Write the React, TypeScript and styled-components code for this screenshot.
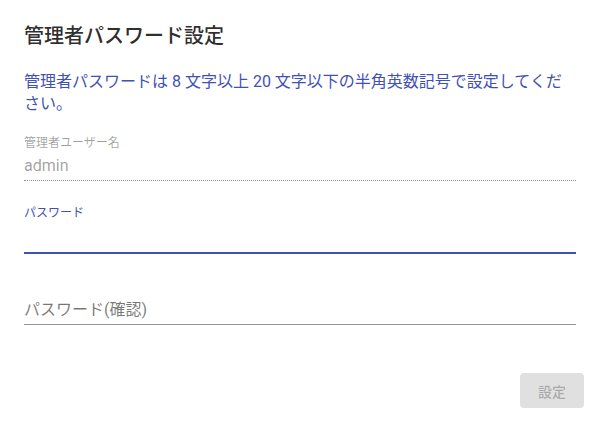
import styled, { createGlobalStyle } from "styled-components"

const GlobalStyle = createGlobalStyle`
  html, body {
    margin: 0;
    padding: 0;
    background: #ffffff;
  }
  body {
    font-family: Roboto, "Noto Sans CJK JP", "Noto Sans", sans-serif;
  }
`

const Dialog = styled.div`
  width: 600px;
  height: 425px;
  box-sizing: border-box;
  background: #ffffff;
  border-radius: 4px;
  display: flex;
  flex-direction: column;
`

const Title = styled.h2`
  margin: 0;
  padding: 20px 24px 0;
  font-size: 20px;
  line-height: 32px;
  font-weight: 500;
  color: rgba(0, 0, 0, 0.84);
`

const Content = styled.div`
  padding: 0 24px;
  display: flex;
  flex-direction: column;
`

const Description = styled.p`
  margin: 19px 0 0;
  font-size: 16px;
  line-height: 22px;
  color: #3f51b5;
`

const Field = styled.div<{ $gap: number }>`
  margin-top: ${(p) => p.$gap}px;
  display: flex;
  flex-direction: column;
`

const Label = styled.label<{ $focused?: boolean }>`
  font-size: 12px;
  line-height: 16px;
  color: ${(p) => (p.$focused ? "#3f51b5" : "rgba(0, 0, 0, 0.38)")};
`

const Input = styled.input<{ $variant: "disabled" | "focused" | "normal" }>`
  box-sizing: border-box;
  width: 100%;
  margin: 0;
  border: none;
  outline: none;
  background: transparent;
  font-family: inherit;
  font-size: 16px;
  line-height: 19px;
  height: ${(p) => (p.$variant === "disabled" ? 30 : p.$variant === "focused" ? 33 : 32)}px;
  padding: ${(p) =>
    p.$variant === "disabled" ? "5px 0 6px" : p.$variant === "focused" ? "6px 0 6px" : "7px 0 5px"};
  color: ${(p) => (p.$variant === "disabled" ? "rgba(0, 0, 0, 0.38)" : "rgba(0, 0, 0, 0.87)")};
  border-bottom: ${(p) =>
    p.$variant === "disabled"
      ? "1px dotted rgba(0, 0, 0, 0.42)"
      : p.$variant === "focused"
      ? "2px solid #3f51b5"
      : "1px solid rgba(0, 0, 0, 0.42)"};

  &::placeholder {
    color: rgba(0, 0, 0, 0.54);
    opacity: 1;
  }
  &:disabled {
    -webkit-text-fill-color: rgba(0, 0, 0, 0.38);
  }
`

const LabelSpacer = styled.div`
  height: 16px;
`

const Actions = styled.div`
  margin-top: auto;
  padding: 0 16px 17px;
  display: flex;
  justify-content: flex-end;
`

const Button = styled.button`
  min-width: 64px;
  height: 35px;
  padding: 0 16px;
  border: none;
  border-radius: 4px;
  background: rgba(0, 0, 0, 0.12);
  color: rgba(0, 0, 0, 0.26);
  font-family: inherit;
  font-size: 14px;
  font-weight: 500;
  cursor: default;
`

export default function App() {
  return (
    <>
      <GlobalStyle />
      <Dialog>
        <Title>管理者パスワード設定</Title>
        <Content>
          <Description>
            管理者パスワードは 8 文字以上 20 文字以下の半角英数記号で設定してください。
          </Description>
          <Field $gap={20}>
            <Label>管理者ユーザー名</Label>
            <Input $variant="disabled" value="admin" disabled readOnly />
          </Field>
          <Field $gap={24}>
            <Label $focused>パスワード</Label>
            <Input $variant="focused" type="password" />
          </Field>
          <Field $gap={23}>
            <LabelSpacer />
            <Input $variant="normal" type="password" placeholder="パスワード(確認)" />
          </Field>
        </Content>
        <Actions>
          <Button disabled>設定</Button>
        </Actions>
      </Dialog>
    </>
  )
}
